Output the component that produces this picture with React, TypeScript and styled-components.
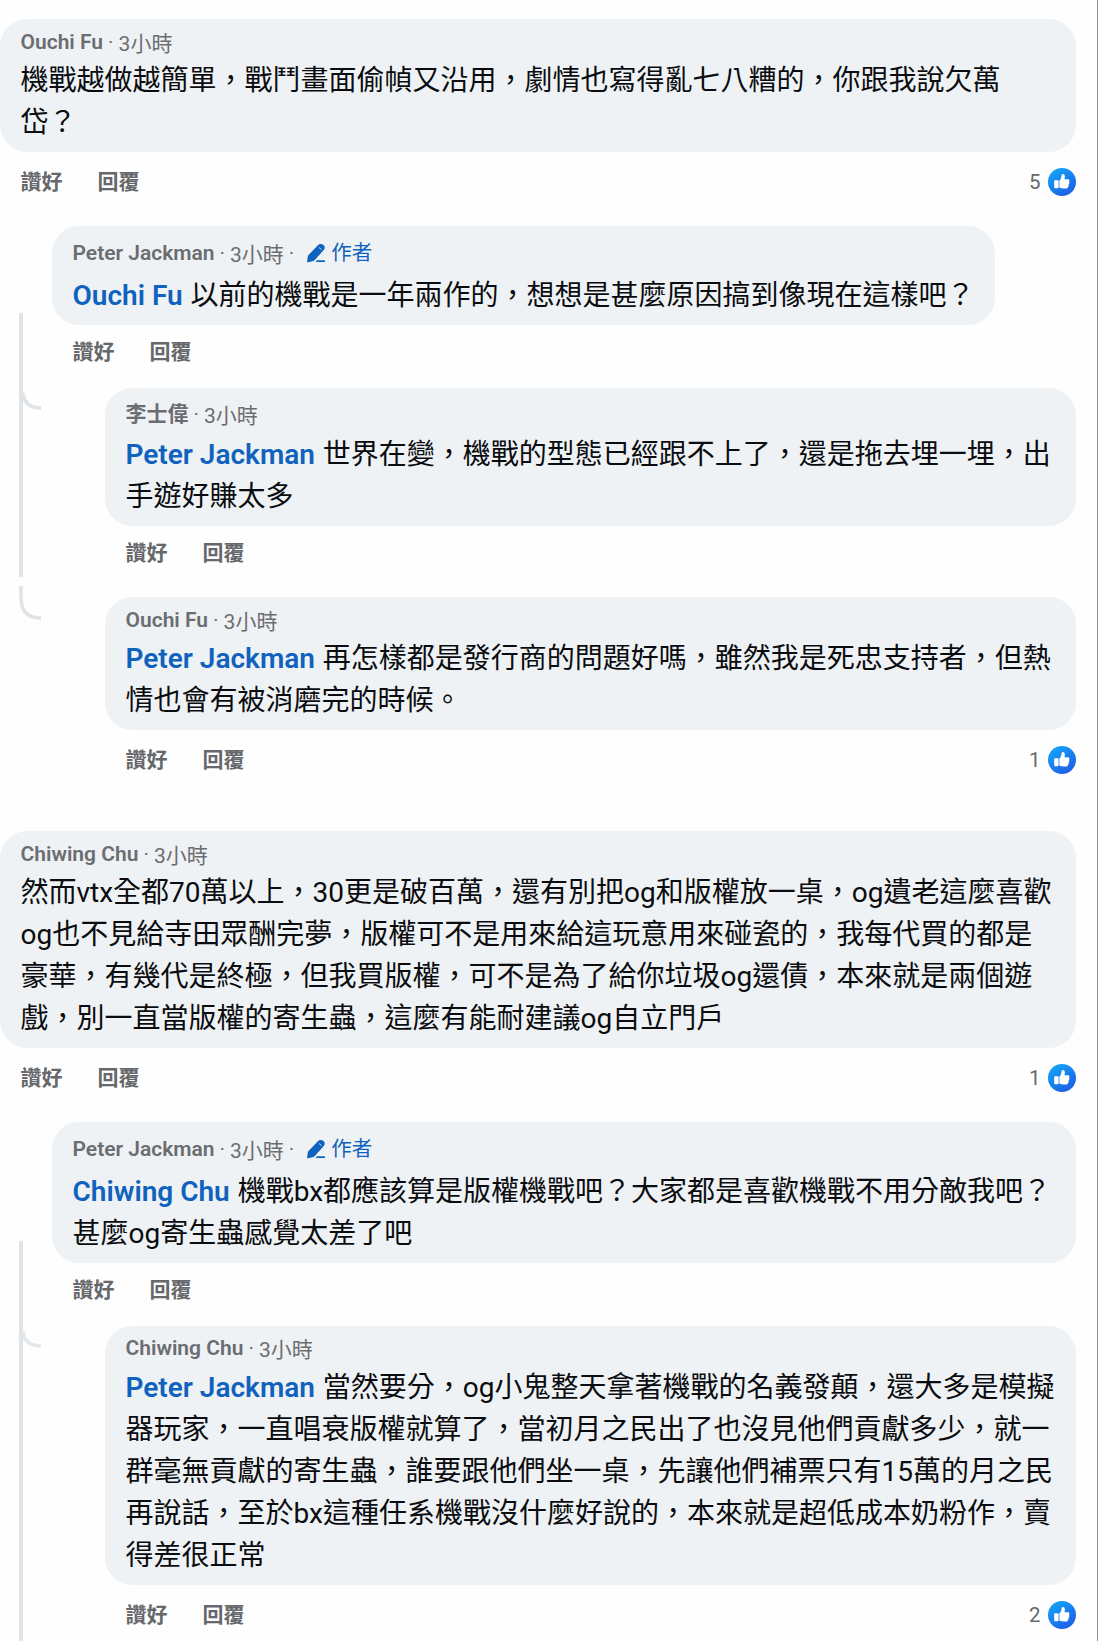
import React from 'react';
import styled, { createGlobalStyle } from 'styled-components';

const GlobalStyle = createGlobalStyle`
  * { box-sizing: border-box; }
  body {
    margin: 0;
    background: #fefefe;
    font-family: Roboto, "Noto Sans CJK TC", sans-serif;
  }
`;

const Page = styled.main`
  width: 1098px;
  height: 1641px;
  overflow: hidden;
  display: flex;
  flex-direction: column;
  padding: 19px 21px 0 0;
  background: #fefefe;
  border-right: 1px solid #8e8e8e;
`;

const Thread = styled.section<{ $mt: number }>`
  display: grid;
  grid-template-columns: 52px 1fr;
  margin-top: ${(p) => p.$mt}px;
`;

const Gutter = styled.div<{ $pt: number }>`
  padding: ${(p) => p.$pt}px 0 0 19px;
  height: 0;
  svg { display: block; overflow: visible; }
`;

const Replies = styled.div`
  min-width: 0;
  display: flex;
  flex-direction: column;
`;

const CommentBox = styled.article<{ $mt?: number; $indent?: number }>`
  display: flex;
  flex-direction: column;
  align-items: flex-start;
  margin-top: ${(p) => p.$mt ?? 0}px;
  padding-left: ${(p) => p.$indent ?? 0}px;
`;

const Bubble = styled.div<{ $width?: number; $height: number }>`
  width: ${(p) => (p.$width ? `${p.$width}px` : '100%')};
  height: ${(p) => p.$height}px;
  display: flex;
  flex-direction: column;
  justify-content: space-between;
  padding: 0 20px 8px 20.5px;
  border-radius: 27px;
  background: #eff2f4;
`;

const Meta = styled.header<{ $pt: number }>`
  display: flex;
  align-items: flex-start;
  padding-top: ${(p) => p.$pt}px;
  height: ${(p) => p.$pt + 24}px;
  font-size: 21px;
  line-height: 24px;
  color: #6b6d71;
  white-space: nowrap;
`;

const Name = styled.span`
  font-weight: 600;
`;

const Dot = styled.span`
  width: 15.5px;
  text-align: center;
`;

const Time = styled.span`
  padding-top: 2px;
`;

const Author = styled.span`
  display: flex;
  align-items: center;
  gap: 5px;
  margin-left: 7px;
  color: #0f62bd;
  font-size: 20.5px;
`;

const Body = styled.div`
  display: flex;
  flex-direction: column;
  flex: none;
  margin-top: -10px;
`;

const Line = styled.p`
  margin: 0;
  height: 42px;
  font-size: 28px;
  line-height: 42px;
  color: #0a0c0f;
  white-space: pre;
`;

const Mention = styled.strong`
  margin-right: 1px;
  font-weight: 600;
  color: #0f62bd;
`;

const Actions = styled.footer<{ $tall: boolean }>`
  display: flex;
  align-items: center;
  align-self: stretch;
  gap: 35px;
  height: ${(p) => (p.$tall ? 60 : 54)}px;
  padding-left: 20.5px;
  color: #66686c;
`;

const Action = styled.button`
  all: unset;
  font-size: 21px;
  line-height: 24px;
  font-weight: 600;
`;

const Reactions = styled.div`
  display: flex;
  align-items: center;
  gap: 7px;
  margin: 0 0.5px 1px auto;
  font-size: 20.5px;
`;

function Pencil() {
  return (
    <svg width="20" height="20" viewBox="0 0 20 20">
      <path
        fill="#0f62bd"
        d="M11.900 2.200C13.200.7 15.500.4 17.200 1.700c1.700 1.300 2 3.500.8 5L8.800 16.900c-.4.4-.9.8-1.500 1L2.200 19.300c-.7.200-1.200-.3-1.100-1l.7-4.900c.1-.5.4-1 .7-1.400z"
      />
      <path stroke="#d9e5f2" strokeWidth="0.9" d="M12.900 4.400l2.700 2.200" />
      <path fill="#0f62bd" d="M11 17.300h7.300a.85.85 0 0 1 0 1.700H9.500z" />
    </svg>
  );
}

function LikeBadge() {
  return (
    <svg width="28" height="28" viewBox="0 0 28 28">
      <defs>
        <linearGradient id="like" x1="0.15" y1="0.1" x2="0.75" y2="0.95">
          <stop offset="0" stopColor="#12a2f8" />
          <stop offset="1" stopColor="#1f5fe6" />
        </linearGradient>
      </defs>
      <circle cx="14" cy="14" r="14" fill="url(#like)" />
      <path
        fill="#fff"
        d="M7.200 12.200h2.500c.5 0 .9.400.9.900v6.200c0 .5-.4.900-.9.900H7.200c-.6 0-1-.4-1-1v-6c0-.6.4-1 1-1z"
      />
      <path
        fill="#fff"
        d="M11.400 12.600c1.300-1.200 2-2.700 2.100-4.800 0-1 .4-1.900 1.300-1.900 1.400 0 2.100 1.200 2.100 2.600 0 1-.2 1.900-.5 2.700h3.400c1 0 1.700.7 1.700 1.500 0 .6-.2 1-.6 1.300.4.3.5.7.5 1.100 0 .7-.4 1.200-.9 1.400.2.3.3.6.2.9 0 .7-.4 1.200-1 1.300.1.200.1.400.1.600 0 .8-.6 1.300-1.500 1.300h-2.800c-1.600 0-2.900-.4-4.100-1.100z"
      />
    </svg>
  );
}

const RAIL = '#e0e4e6';

function FirstRail() {
  return (
    <svg width="24" height="310" fill="none" stroke={RAIL} strokeWidth="4">
      <path d="M2 0V264" />
      <path d="M4 80C5 90 11 95 22 95" strokeWidth="3.5" />
      <path d="M2 273V285C2 299 9 305 22 305" strokeWidth="3.5" />
    </svg>
  );
}

function SecondRail() {
  return (
    <svg width="24" height="400" fill="none" stroke={RAIL} strokeWidth="4">
      <path d="M2 0V400" />
      <path d="M4 90C5 100 11 105 22 105" stroke="#e5e7ef" strokeWidth="3.5" />
    </svg>
  );
}

interface CommentProps {
  name: string;
  lines: string[];
  height: number;
  metaTop?: number;
  mention?: string;
  author?: boolean;
  likes?: number;
  width?: number;
  indent?: number;
  mt?: number;
}

function Comment(props: CommentProps) {
  const { name, lines, height, metaTop = 11, mention, author, likes, width, indent, mt } = props;
  return (
    <CommentBox $mt={mt} $indent={indent}>
      <Bubble $height={height} $width={width}>
        <Meta $pt={metaTop}>
          <Name>{name}</Name>
          <Dot>·</Dot>
          <Time>3小時</Time>
          {author && (
            <>
              <Dot>·</Dot>
              <Author>
                <Pencil />
                作者
              </Author>
            </>
          )}
        </Meta>
        <Body>
          {lines.map((line, i) => (
            <Line key={line}>
              {i === 0 && mention && <Mention>{mention}</Mention>}
              {i === 0 && mention ? ` ${line}` : line}
            </Line>
          ))}
        </Body>
      </Bubble>
      <Actions $tall={likes !== undefined}>
        <Action>讚好</Action>
        <Action>回覆</Action>
        {likes !== undefined && (
          <Reactions>
            {likes}
            <LikeBadge />
          </Reactions>
        )}
      </Actions>
    </CommentBox>
  );
}

export default function App() {
  return (
    <Page lang="zh-Hant">
      <GlobalStyle />
      <Comment
        name="Ouchi Fu"
        height={133}
        likes={5}
        lines={['機戰越做越簡單，戰鬥畫面偷幀又沿用，劇情也寫得亂七八糟的，你跟我說欠萬', '岱？']}
      />
      <Thread $mt={14}>
        <Gutter $pt={87}>
          <FirstRail />
        </Gutter>
        <Replies>
          <Comment
            name="Peter Jackman"
            author
            mention="Ouchi Fu"
            height={99}
            width={943}
            metaTop={15}
            lines={['以前的機戰是一年兩作的，想想是甚麼原因搞到像現在這樣吧？']}
          />
          <Comment
            name="李士偉"
            mention="Peter Jackman"
            height={138}
            metaTop={14}
            indent={53}
            mt={9}
            lines={['世界在變，機戰的型態已經跟不上了，還是拖去埋一埋，出', '手遊好賺太多']}
          />
          <Comment
            name="Ouchi Fu"
            mention="Peter Jackman"
            height={133}
            indent={53}
            mt={17}
            likes={1}
            lines={['再怎樣都是發行商的問題好嗎，雖然我是死忠支持者，但熱', '情也會有被消磨完的時候。']}
          />
        </Replies>
      </Thread>
      <Comment
        name="Chiwing Chu"
        height={217}
        mt={41}
        likes={1}
        lines={[
          '然而vtx全都70萬以上，30更是破百萬，還有別把og和版權放一桌，og遺老這麼喜歡',
          'og也不見給寺田眾酬完夢，版權可不是用來給這玩意用來碰瓷的，我每代買的都是',
          '豪華，有幾代是終極，但我買版權，可不是為了給你垃圾og還債，本來就是兩個遊',
          '戲，別一直當版權的寄生蟲，這麼有能耐建議og自立門戶',
        ]}
      />
      <Thread $mt={14}>
        <Gutter $pt={119}>
          <SecondRail />
        </Gutter>
        <Replies>
          <Comment
            name="Peter Jackman"
            author
            mention="Chiwing Chu"
            height={141}
            metaTop={15}
            lines={['機戰bx都應該算是版權機戰吧？大家都是喜歡機戰不用分敵我吧？', '甚麼og寄生蟲感覺太差了吧']}
          />
          <Comment
            name="Chiwing Chu"
            mention="Peter Jackman"
            height={259}
            metaTop={10}
            indent={53}
            mt={9}
            likes={2}
            lines={[
              '當然要分，og小鬼整天拿著機戰的名義發顛，還大多是模擬',
              '器玩家，一直唱衰版權就算了，當初月之民出了也沒見他們貢獻多少，就一',
              '群毫無貢獻的寄生蟲，誰要跟他們坐一桌，先讓他們補票只有15萬的月之民',
              '再說話，至於bx這種任系機戰沒什麼好說的，本來就是超低成本奶粉作，賣',
              '得差很正常',
            ]}
          />
        </Replies>
      </Thread>
    </Page>
  );
}
